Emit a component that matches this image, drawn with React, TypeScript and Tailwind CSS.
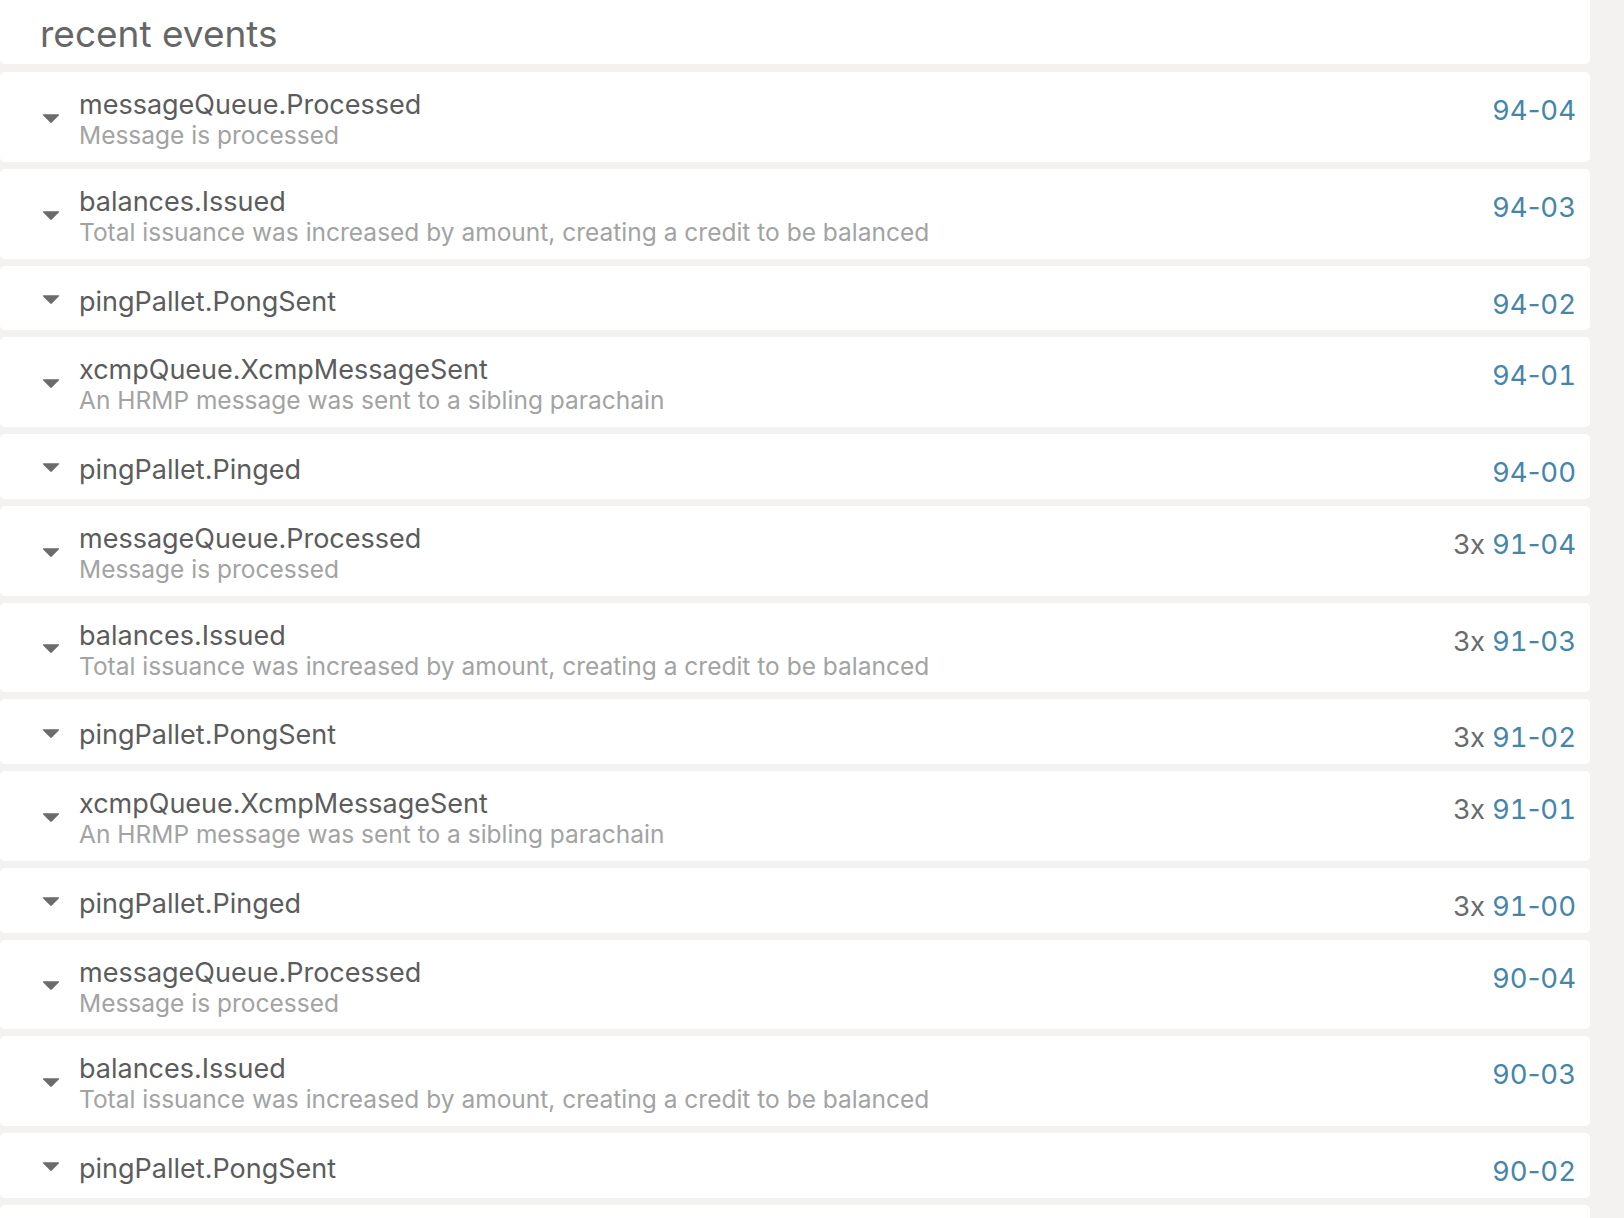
import React from "react";

type EventRow = {
    name: string;
    desc?: string;
    count?: string;
    idx: string;
};

const events: EventRow[] = [
    { name: "messageQueue.Processed", desc: "Message is processed", idx: "94-04" },
    { name: "balances.Issued", desc: "Total issuance was increased by amount, creating a credit to be balanced", idx: "94-03" },
    { name: "pingPallet.PongSent", idx: "94-02" },
    { name: "xcmpQueue.XcmpMessageSent", desc: "An HRMP message was sent to a sibling parachain", idx: "94-01" },
    { name: "pingPallet.Pinged", idx: "94-00" },
    { name: "messageQueue.Processed", desc: "Message is processed", count: "3x", idx: "91-04" },
    { name: "balances.Issued", desc: "Total issuance was increased by amount, creating a credit to be balanced", count: "3x", idx: "91-03" },
    { name: "pingPallet.PongSent", count: "3x", idx: "91-02" },
    { name: "xcmpQueue.XcmpMessageSent", desc: "An HRMP message was sent to a sibling parachain", count: "3x", idx: "91-01" },
    { name: "pingPallet.Pinged", count: "3x", idx: "91-00" },
    { name: "messageQueue.Processed", desc: "Message is processed", idx: "90-04" },
    { name: "balances.Issued", desc: "Total issuance was increased by amount, creating a credit to be balanced", idx: "90-03" },
    { name: "pingPallet.PongSent", idx: "90-02" },
    { name: "xcmpQueue.XcmpMessageSent", desc: "An HRMP message was sent to a sibling parachain", idx: "90-01" },
];

const Caret = () => (
    <svg width="18" height="10" viewBox="0 0 18 10" className="shrink-0">
        <path d="M1 1.2 Q0.4 0.2 1.6 0.2 H16.4 Q17.6 0.2 17 1.2 L9.8 8.6 Q9 9.5 8.2 8.6 Z" fill="#6b6b6b" />
    </svg>
);

// block-event index, digits tabular but keep the dash narrow
const Idx = ({ value }: { value: string }) => {
    const [block, ev] = value.split("-");
    return (
        <span className="text-[#4685aa]">
            <span className="tabular-nums">{block}</span>-<span className="tabular-nums">{ev}</span>
        </span>
    );
};

const Row = ({ ev }: { ev: EventRow }) => {
    const single = !ev.desc;
    return (
        <div className="flex items-start bg-white rounded-[5px] pl-[42px] pr-[14px]">
            <div className="self-center translate-y-[2px]">
                <Caret />
            </div>
            <div className={single ? "flex-1 pl-[19px] pt-[19px] pb-[12.75px]" : "flex-1 pl-[19px] pt-[16px] pb-[12.75px]"}>
                <div className="text-[27px] leading-[33px] text-[#5c5c5c]">{ev.name}</div>
                {ev.desc && <div className="text-[24.5px] leading-[28px] text-[#a3a3a3]">{ev.desc}</div>}
            </div>
            <div className="pt-[22px] text-[27.5px] leading-[32px] whitespace-nowrap">
                {ev.count && <span className="text-[#6b6b6b] [font-feature-settings:'calt'_0]">{ev.count}</span>}
                {ev.count && <span className="inline-block w-[7px]" />}
                <Idx value={ev.idx} />
            </div>
        </div>
    );
};

export default function App() {
    return (
        <div className="min-h-screen bg-[#f3f2f1] pr-[34px] overflow-hidden" style={{ fontFamily: "Inter, 'Noto Sans', sans-serif" }}>
            <div className="bg-white rounded-b-[5px] h-[64px] pl-[40px] pt-[14px]">
                <h2 className="text-[37px] leading-[40px] text-[#666666]">recent events</h2>
            </div>
            <div className="flex flex-col gap-[7px] mt-[8px]">
                {events.map((ev, i) => (
                    <Row key={i} ev={ev} />
                ))}
            </div>
        </div>
    );
}
